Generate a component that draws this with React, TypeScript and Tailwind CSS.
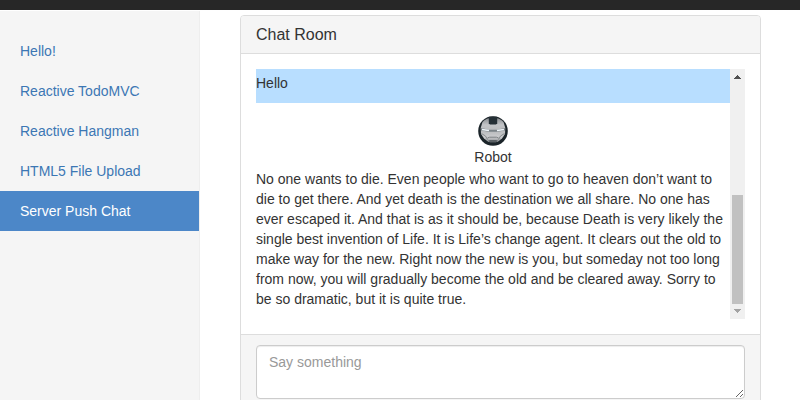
const links = ["Hello!", "Reactive TodoMVC", "Reactive Hangman", "HTML5 File Upload", "Server Push Chat"];

const lines = [
  "No one wants to die. Even people who want to go to heaven don’t want to",
  "die to get there. And yet death is the destination we all share. No one has",
  "ever escaped it. And that is as it should be, because Death is very likely the",
  "single best invention of Life. It is Life’s change agent. It clears out the old to",
  "make way for the new. Right now the new is you, but someday not too long",
  "from now, you will gradually become the old and be cleared away. Sorry to",
  "be so dramatic, but it is quite true.",
];

function RobotAvatar() {
  return (
    <svg width="30" height="30" viewBox="0 0 30 30" className="block">
      <defs>
        <linearGradient id="steel" x1="0" y1="0" x2="0" y2="1">
          <stop offset="0" stopColor="#85898d" />
          <stop offset="0.3" stopColor="#c3c5c8" />
          <stop offset="0.55" stopColor="#b9bbbd" />
          <stop offset="0.8" stopColor="#cbccce" />
          <stop offset="1" stopColor="#8c8f92" />
        </linearGradient>
      </defs>
      <circle cx="15" cy="15" r="14.8" fill="#1b2429" />
      <path d="M4.5 6 Q8 2 15 1.6 Q22 2 25.5 6 L27.3 12 L27 18 L24 22.5 L19.5 26 H10.5 L6 22.5 L3 18 L2.7 12Z" fill="url(#steel)" />
      <path d="M10.8 .8 H19.2 V7.2 L18 8.6 H12 L10.8 7.2Z" fill="#253036" />
      <path d="M3 12 L11 13.8 H19 L27 12 V14.5 L19 15.8 H11 L3 14.5Z" fill="#7c8489" />
      <path d="M4 13.5 L11 14.5 M26 13.5 L19 14.5" stroke="#eef5f9" strokeWidth="1.3" />
      <path d="M3.5 17.5 L7.5 20 L9.5 23.5 M26.5 17.5 L22.5 20 L20.5 23.5" stroke="#7e8285" strokeWidth="0.9" fill="none" />
      <path d="M9.5 22 L11.5 21.2 H18.5 L20.5 22" stroke="#74787b" strokeWidth="0.9" fill="none" />
      <path d="M10 24.8 L12 24 H18 L20 24.8 L18 26.6 H12Z" fill="#5b6165" />
    </svg>
  );
}

function ScrollBar() {
  return (
    <div className="flex h-[250px] w-[15px] flex-col items-center bg-[#f0f0f0]">
      <svg width="15" height="17" viewBox="0 0 15 17" shapeRendering="crispEdges">
        <path d="M7 6h1v1h1v1h1v1h1v1H4V9h1V8h1V7h1z" fill="#505050" />
      </svg>
      <div className="mt-[109px] h-[109px] w-[11px] bg-[#c1c1c1]" />
      <svg width="15" height="15" viewBox="0 0 15 15" shapeRendering="crispEdges">
        <path d="M4 5h7v1h-1v1H9v1H8v1H7V8H6V7H5V6H4z" fill="#a3a3a3" />
      </svg>
    </div>
  );
}

export default function App() {
  return (
    <div className="h-[400px] w-[800px] overflow-hidden bg-white font-['Liberation_Sans',Arial,sans-serif] text-[14px] leading-[20px] text-[#333]">
      <div className="h-[10px] bg-[#272727]" />
      <div className="flex h-[390px] pt-px">
        <nav className="w-[200px] shrink-0 border-r border-[#eee] bg-[#f5f5f5] pt-5">
          {links.map((label, i) => (
            <a
              key={label}
              className={`block h-10 px-5 py-[10px] ${i === 4 ? "bg-[#4c87c8] text-white" : "text-[#3c77b4]"}`}
            >
              {label}
            </a>
          ))}
        </nav>
        <main className="ml-10 mt-1 h-[450px] w-[521px] shrink-0 rounded-[4px] border border-[#ddd] bg-white">
          <h3 className="h-[38px] rounded-t-[3px] border-b border-[#ddd] bg-[#f5f5f5] px-[15px] pt-[9px] text-[16px] leading-[19px]">
            Chat Room
          </h3>
          <div className="flex h-[280px] px-[15px] pt-[15px]">
            <div className="h-[250px] w-[474px] shrink-0 whitespace-nowrap">
              <p className="h-[34px] bg-[#b8deff] pt-[4px]">Hello</p>
              <div className="flex flex-col items-center pt-[13px]">
                <RobotAvatar />
                <span className="mt-px">Robot</span>
              </div>
              <p className="mt-[2px]">
                {lines.map((line) => (
                  <span key={line} className="block">{line}</span>
                ))}
              </p>
            </div>
            <ScrollBar />
          </div>
          <div className="h-[130px] border-t border-[#ddd] bg-[#f5f5f5] px-[15px] pt-[10px]">
            <textarea
              placeholder="Say something"
              className="block h-[54px] w-[489px] resize rounded-[4px] border border-[#ccc] bg-white px-3 py-[6px] shadow-[inset_0_1px_1px_rgba(0,0,0,0.075)] placeholder:text-[#999]"
            />
          </div>
        </main>
      </div>
    </div>
  );
}
